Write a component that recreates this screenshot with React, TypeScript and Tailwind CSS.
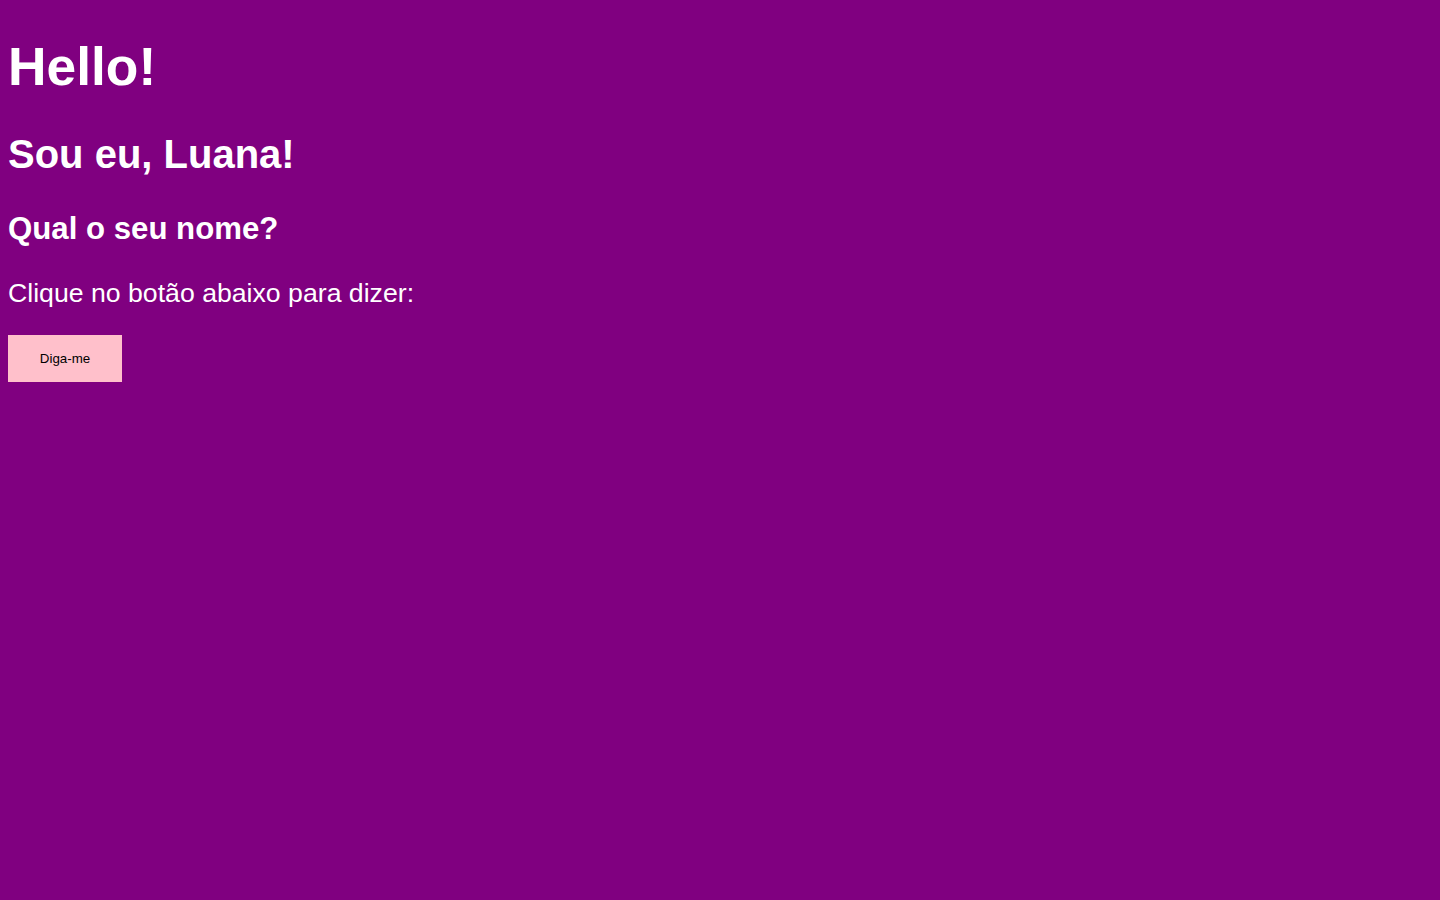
export default function App() {
	return (
		<div className="min-h-screen flow-root bg-[#800080] px-2 font-['Liberation_Sans',Arial,sans-serif] text-white">
			<h1 className="my-[0.67em] text-[53.33px] font-bold leading-[normal]">Hello!</h1>
			<h2 className="my-[0.83em] text-[40px] font-bold leading-[normal]">Sou eu, Luana!</h2>
			<h3 className="my-[1em] text-[31.2px] font-bold leading-[normal]">Qual o seu nome?</h3>
			<p className="my-[1em] text-[26.67px] leading-[normal]">Clique no botão abaixo para dizer:</p>
			<button className="h-[47px] w-[114px] bg-[#ffc0cb] text-[13.33px] text-black">Diga-me</button>
		</div>
	);
}
